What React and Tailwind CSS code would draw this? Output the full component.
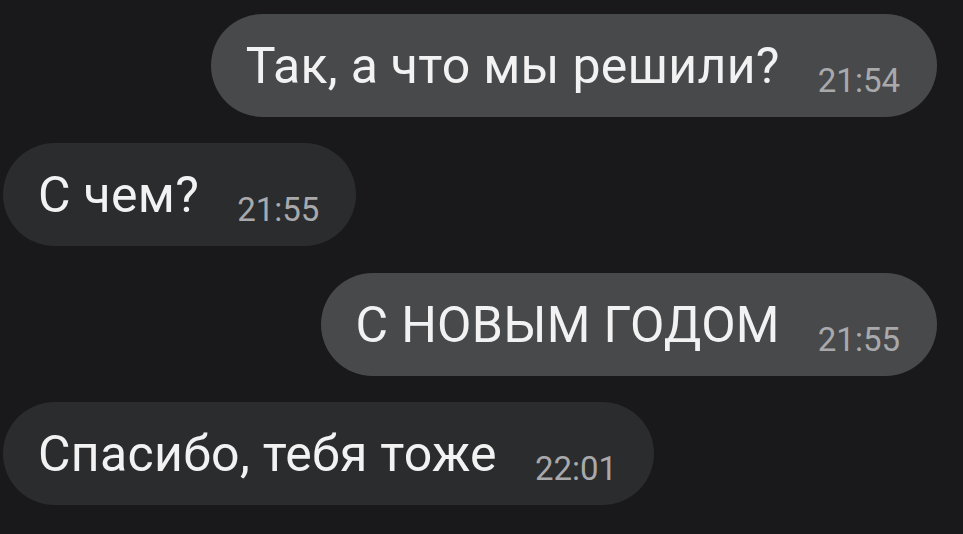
export default function App() {
  const msgs = [
    { text: "Так, а что мы решили?", time: "21:54", out: true },
    { text: "С чем?", time: "21:55", out: false },
    { text: "С НОВЫМ ГОДОМ", time: "21:55", out: true },
    { text: "Спасибо, тебя тоже", time: "22:01", out: false },
  ];
  return (
    <div className="w-[963px] h-[534px] bg-[#19191b] flex flex-col gap-[26.3px] pt-[14px] pl-[3px] pr-[26px] overflow-hidden" style={{ fontFamily: "Roboto, 'Liberation Sans', sans-serif" }}>
      {msgs.map((m, i) => (
        <div key={i} className={m.out ? "flex justify-end" : "flex justify-start"}>
          <div className={(m.out ? "bg-[#48494b]" : "bg-[#2b2c2e]") + " h-[103px] rounded-full flex items-baseline pl-[35px] pr-[37px] pt-[23px]"}>
            <span className="text-[50px] leading-[58px] text-[#f2f2f2] tracking-[0.3px]">{m.text}</span>
            <span className="text-[33px] text-[#a9a9ab] ml-[38px] relative top-[9px]">{m.time}</span>
          </div>
        </div>
      ))}
    </div>
  );
}
